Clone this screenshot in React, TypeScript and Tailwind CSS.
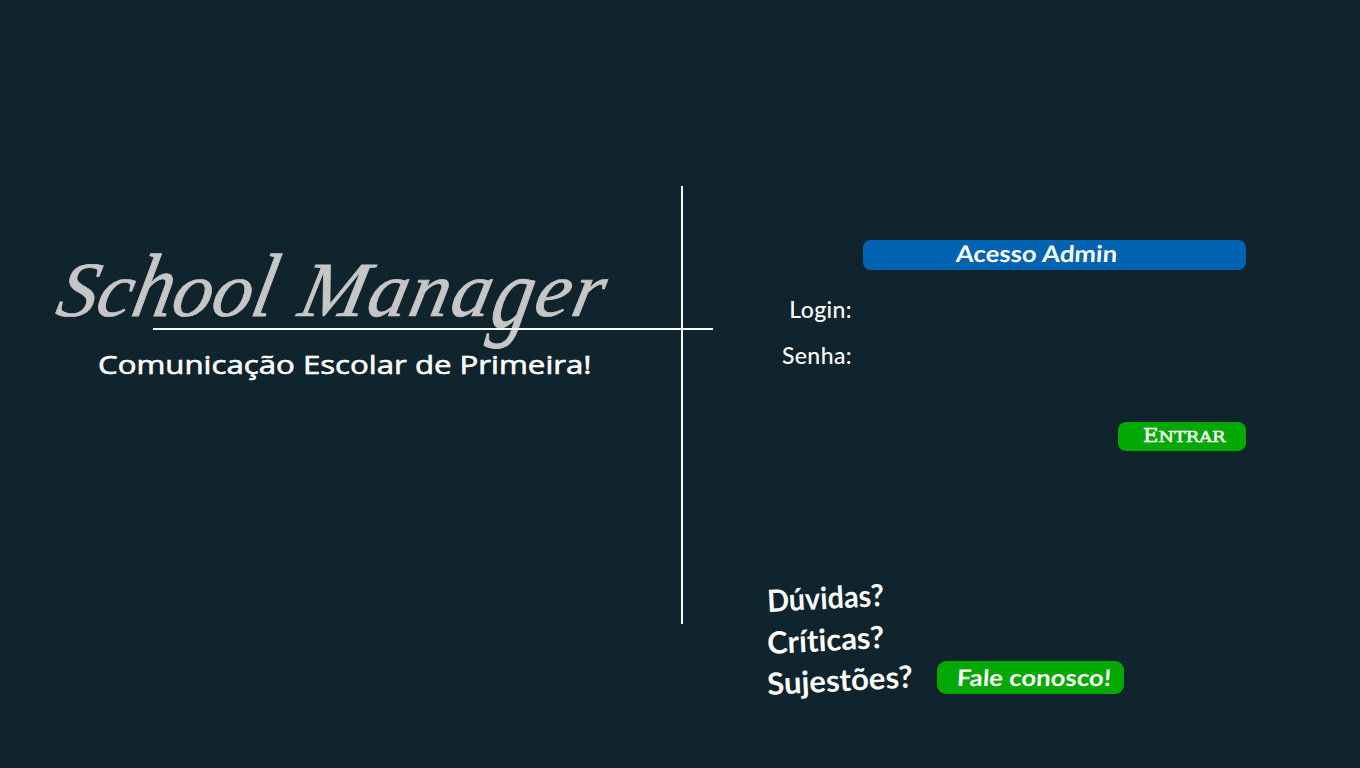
function Brand() {
  return (
    <section className="relative w-[681px] pt-[246px]">
      <h1 className="ml-[53px] flex h-[83px] origin-[0_75px] -skew-x-12 scale-x-[1.02] gap-[25px] whitespace-nowrap font-['Liberation_Serif',serif] text-[78px] italic leading-[88px] text-[#c6c6c6] [-webkit-text-stroke:0.7px_#c6c6c6]">
        <span>
          Sc<span className="inline-block origin-[0_71px] scale-y-115">h</span>oo
          <span className="inline-block origin-[0_71px] scale-y-115">l</span>
        </span>
        <span className="tracking-[2px]">
          Mana<span className="inline-block origin-[0_35px] scale-y-130">g</span>er
        </span>
      </h1>
      <div className="relative -mt-px ml-[153px] h-[2px] w-[560px] bg-white" />
      <p className="ml-[98px] mt-[14px] h-10 origin-left scale-x-120 whitespace-nowrap font-['Open_Sans',sans-serif] text-[26px] leading-10 text-white [-webkit-text-stroke:0.6px_white]">
        Comunicação Escolar de Primeira!
      </p>
    </section>
  );
}

function AccessForm() {
  return (
    <form className="flex flex-col pt-[240px]">
      <h2 className="ml-[180px] h-[30px] w-[383px] rounded-lg bg-[#0063b1] pl-[93px] font-['Lato',sans-serif] text-[23px] font-bold leading-[26px] text-white">
        <span className="inline-block origin-left -skew-x-3 scale-x-112 whitespace-nowrap">Acesso Admin</span>
      </h2>
      <div className="mt-[16px] w-[169px] text-right font-['Lato',sans-serif] text-[23px] font-medium leading-[46px] tracking-[0.4px] text-white">
        <label className="block">Login:</label>
        <label className="block">Senha:</label>
      </div>
      <button
        type="button"
        className="ml-[435px] mt-[44px] h-[29px] w-32 rounded-lg bg-[#00a800] pl-[25px] text-left font-['DejaVu_Serif',serif] text-[18px] leading-7 text-white [-webkit-text-stroke:0.5px_white]"
      >
        <span className="inline-block origin-left scale-x-118 whitespace-nowrap">
          E<span className="text-[15px]">NTRAR</span>
        </span>
      </button>
    </form>
  );
}

function Contact() {
  return (
    <div className="mt-[127px] flex pl-[84px]">
      <div className="flex w-[170px] flex-col items-start gap-[5.5px] pt-[4px] font-['Lato',sans-serif] text-[30.5px] font-bold leading-9 text-white [font-variant-ligatures:none]">
        <p className="origin-left -rotate-3 scale-x-[0.945] whitespace-nowrap">Dúvidas?</p>
        <p className="origin-left -rotate-3 scale-x-[1.015] whitespace-nowrap">Críticas?</p>
        <p className="origin-left -rotate-3 scale-x-[1.02] whitespace-nowrap">Sujestões?</p>
      </div>
      <button
        type="button"
        className="mt-[83px] h-[33px] w-[187px] rounded-[9px] bg-[#00a800] pl-[20px] text-left font-['Lato',sans-serif] text-[23px] font-bold leading-[30px] text-white"
      >
        <span className="inline-block origin-left -translate-y-px -skew-x-3 scale-x-112 whitespace-nowrap">Fale conosco!</span>
      </button>
    </div>
  );
}

export default function App() {
  return (
    <main className="flex h-[768px] w-[1360px] overflow-hidden bg-[#10242d]">
      <Brand />
      <div className="mt-[186px] h-[438px] w-[2px] bg-white" />
      <section className="w-[677px]">
        <AccessForm />
        <Contact />
      </section>
    </main>
  );
}
